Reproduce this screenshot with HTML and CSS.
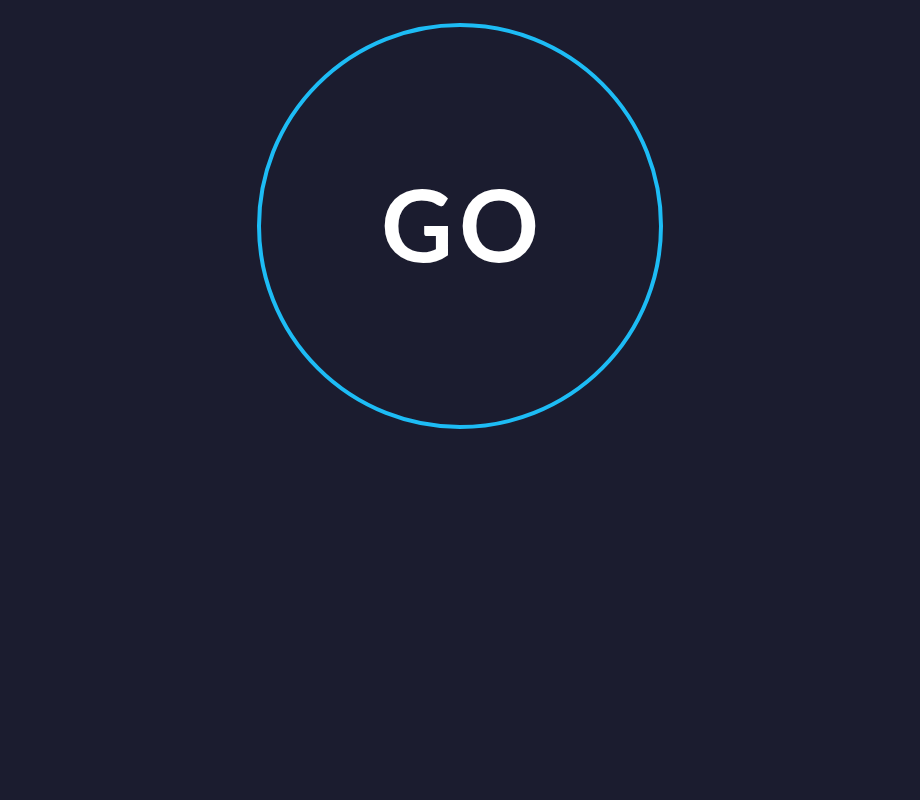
FILE: index.html
```html
<!DOCTYPE html>
<html>
<head>
<meta charset="utf-8">
<link rel="stylesheet" href="styles.css">
</head>
<body>
<main class="stage">
  <button class="go">GO</button>
</main>
</body>
</html>
```
FILE: styles.css
```css
html, body {
  margin: 0;
  padding: 0;
  background: #1b1c2f;
  height: 100%;
}
.stage {
  display: flex;
  justify-content: center;
  padding-top: 23px;
}
.go {
  box-sizing: border-box;
  width: 406px;
  height: 406px;
  border-radius: 50%;
  border: 4px solid #1dbcf5;
  background: transparent;
  color: #ffffff;
  font-family: "Lato", sans-serif;
  font-weight: 700;
  font-size: 99px;
  line-height: 1;
  padding: 0 0 6px;
  display: flex;
  align-items: center;
  justify-content: center;
  letter-spacing: 6px;
  text-indent: 6px;
}
```
